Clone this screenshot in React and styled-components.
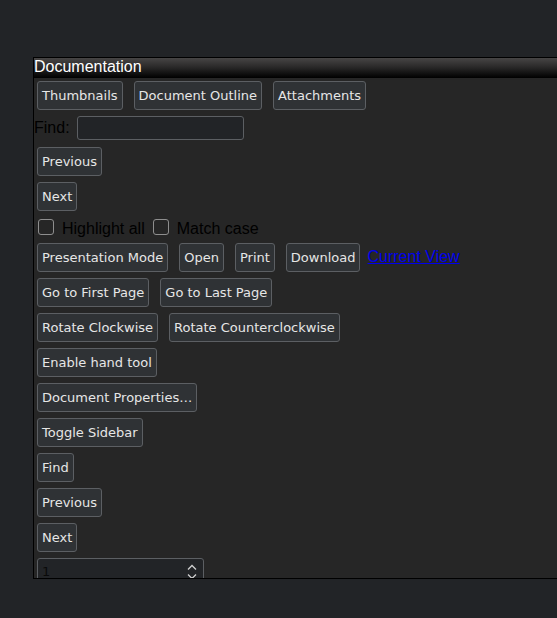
import styled, { createGlobalStyle } from 'styled-components'

const Global = createGlobalStyle`
  html, body {
    margin: 0;
    background: #222427;
    overflow: hidden;
  }
`

const Page = styled.div`
  padding: 57px 0 0 33px;
  height: 618px;
  box-sizing: border-box;
`

const Panel = styled.div`
  width: 600px;
  height: 522px;
  box-sizing: border-box;
  border: 1px solid #000;
  border-right: none;
  background: #262626;
  overflow: hidden;
  font-family: "Liberation Sans", Arial, sans-serif;
`

const TitleBar = styled.div`
  height: 20px;
  box-sizing: border-box;
  background: linear-gradient(#474545, #2a2929 45%, #0b0b0b 85%, #000);
  color: #fff;
  font-size: 16px;
  line-height: 18px;
`

const Row = styled.div`
  display: flex;
  align-items: center;
  gap: 5px;
`

const Button = styled.button`
  height: 29px;
  margin: 3px;
  padding: 0 4px;
  box-sizing: border-box;
  border: 1px solid #5c5f63;
  border-radius: 3px;
  background: #2f3235;
  color: #e6e6e6;
  font-family: "DejaVu Sans", sans-serif;
  font-size: 13px;
  white-space: nowrap;
`

const FindRow = styled.div`
  display: flex;
  align-items: center;
  padding: 3px 0 4px;
`

const Label = styled.span`
  color: #000;
  font-size: 16px;
  margin-right: 7px;
`

const TextField = styled.input`
  width: 167px;
  height: 24px;
  box-sizing: border-box;
  border: 1px solid #5c5f63;
  border-radius: 3px;
  background: #222427;
  color: #000;
  outline: none;
`

const CheckRow = styled.div`
  display: flex;
  align-items: center;
  height: 26px;
  padding-left: 4px;
`

const Box = styled.span`
  width: 16px;
  height: 16px;
  box-sizing: border-box;
  border: 1px solid #8e8e8e;
  border-radius: 3px;
  margin-right: 8px;
`

const CheckText = styled.span`
  color: #000;
  font-size: 16px;
  margin-right: 8px;
  padding-top: 4px;
`

const Link = styled.a`
  color: #0000ee;
  text-decoration: underline;
  font-size: 16px;
  margin-top: -1px;
  margin-left: -1px;
`

const Spinner = styled.div`
  display: flex;
  align-items: flex-start;
  justify-content: space-between;
  width: 167px;
  height: 30px;
  margin: 3px;
  padding: 5px 6px 0 4px;
  box-sizing: border-box;
  border: 1px solid #5c5f63;
  border-radius: 3px;
  background: #222427;
  color: #0a0a0a;
  font-family: "DejaVu Sans", sans-serif;
  font-size: 13px;
`

const Check = ({ label }) => (
  <>
    <Box />
    <CheckText>{label}</CheckText>
  </>
)

export default function App() {
  return (
    <Page>
      <Global />
      <Panel>
        <TitleBar>Documentation</TitleBar>
        <Row>
          <Button>Thumbnails</Button>
          <Button>Document Outline</Button>
          <Button>Attachments</Button>
        </Row>
        <FindRow>
          <Label>Find:</Label>
          <TextField />
        </FindRow>
        <Row><Button>Previous</Button></Row>
        <Row><Button>Next</Button></Row>
        <CheckRow>
          <Check label="Highlight all" />
          <Check label="Match case" />
        </CheckRow>
        <Row>
          <Button>Presentation Mode</Button>
          <Button>Open</Button>
          <Button>Print</Button>
          <Button>Download</Button>
          <Link href="#">Current View</Link>
        </Row>
        <Row>
          <Button>Go to First Page</Button>
          <Button>Go to Last Page</Button>
        </Row>
        <Row>
          <Button>Rotate Clockwise</Button>
          <Button>Rotate Counterclockwise</Button>
        </Row>
        <Row><Button>Enable hand tool</Button></Row>
        <Row><Button>Document Properties…</Button></Row>
        <Row><Button>Toggle Sidebar</Button></Row>
        <Row><Button>Find</Button></Row>
        <Row><Button>Previous</Button></Row>
        <Row><Button>Next</Button></Row>
        <Spinner>
          <span>1</span>
          <svg width="10" height="16" viewBox="0 0 10 16" fill="none" stroke="#d0d0d0" strokeWidth="1.3">
            <path d="M1 5.5 L5 1.5 L9 5.5" />
            <path d="M1 10.5 L5 14.5 L9 10.5" />
          </svg>
        </Spinner>
      </Panel>
    </Page>
  )
}
